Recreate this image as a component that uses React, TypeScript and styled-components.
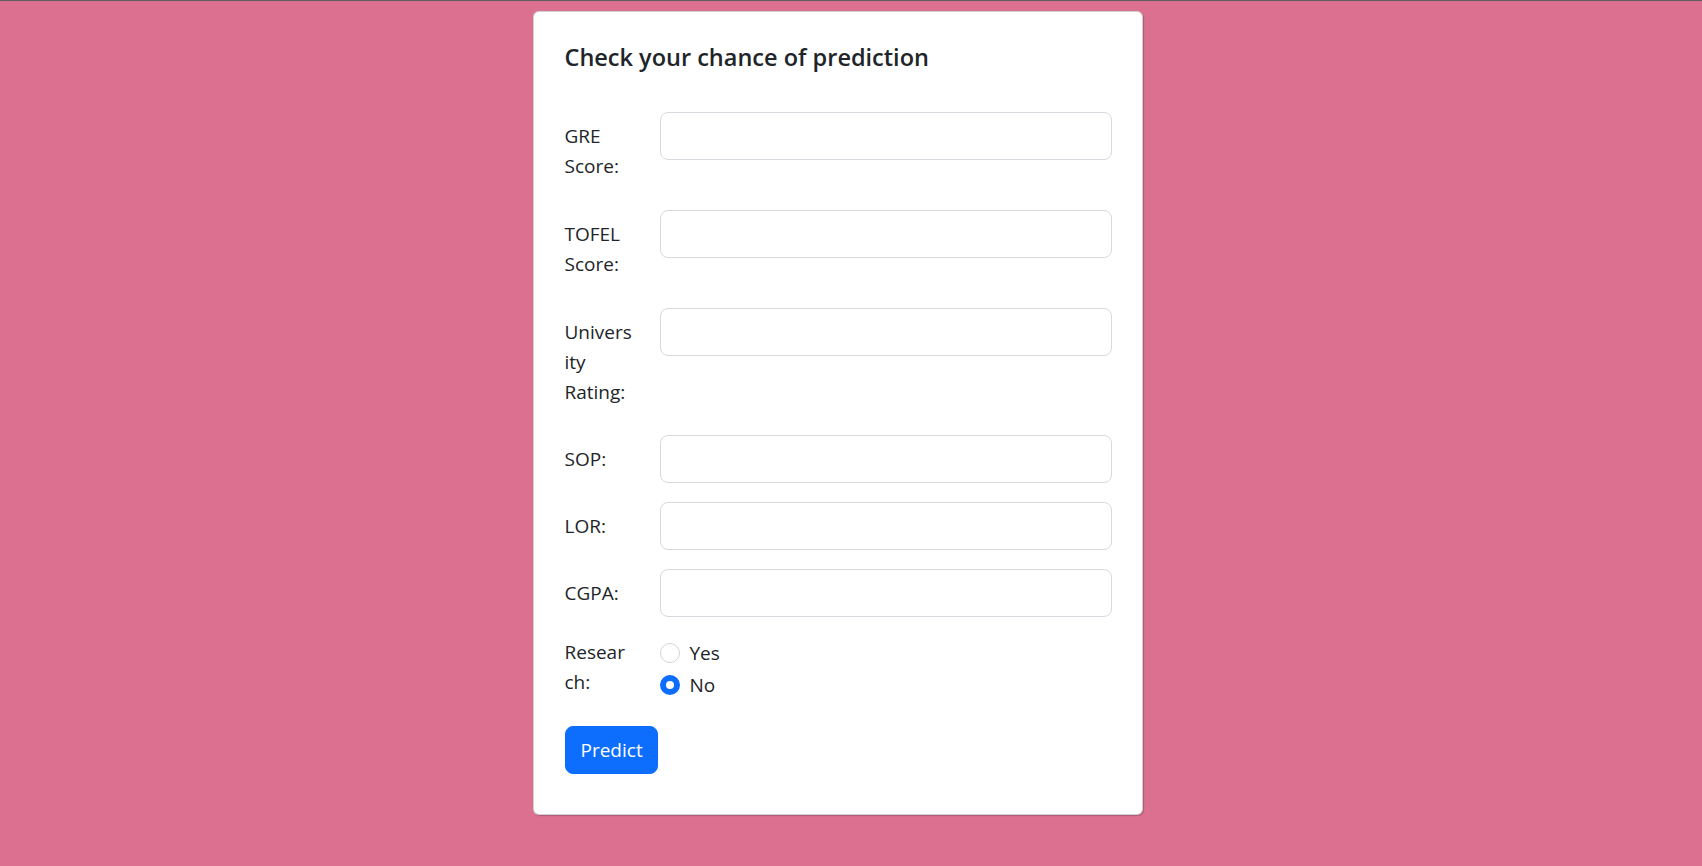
import React, { useState } from "react";
import styled, { createGlobalStyle } from "styled-components";

const GlobalStyle = createGlobalStyle`
  html, body {
    margin: 0;
    padding: 0;
  }
  body {
    background: #dc7090;
    border-top: 1px solid #5f5f62;
    font-family: "Open Sans", "Noto Sans", sans-serif;
    color: #212529;
    min-height: 865px;
  }
`;

const Page = styled.div`
  display: flex;
  justify-content: center;
  padding: 10px 27px 0 0;
`;

const Card = styled.div`
  width: 610px;
  box-sizing: border-box;
  background: #fff;
  border: 1px solid rgba(0, 0, 0, 0.18);
  border-radius: 6px;
  box-shadow: 1px 1px 1px rgba(0, 0, 0, 0.2);
  padding: 30px 30px 40px 31px;
`;

const Title = styled.h4`
  margin: 0 0 41px;
  padding-top: 1px;
  font-size: 23.5px;
  font-weight: 600;
  line-height: 28px;
  color: #212529;
`;

const Row = styled.div<{ $gap?: number }>`
  display: grid;
  grid-template-columns: 71px 1fr;
  column-gap: 24px;
  align-items: start;
  margin-bottom: ${(p) => p.$gap ?? 20}px;
`;

const Label = styled.label<{ $flush?: boolean }>`
  font-size: 19px;
  line-height: 30px;
  padding: ${(p) => (p.$flush ? "0" : "9px 0")};
  color: #212529;
  overflow-wrap: anywhere;
`;

const Input = styled.input`
  display: block;
  width: 100%;
  height: 48px;
  box-sizing: border-box;
  border: 1px solid #d6d9de;
  border-radius: 8px;
  padding: 8px 16px;
  font-size: 20px;
  font-family: inherit;
  background: #fff;
  outline: none;
`;

const RadioGroup = styled.div`
  display: flex;
  flex-direction: column;
  gap: 2px;
  padding-top: 1px;
`;

const RadioItem = styled.label`
  display: flex;
  align-items: center;
  gap: 10px;
  height: 30px;
  font-size: 19px;
  color: #212529;
`;

const Radio = styled.input`
  appearance: none;
  margin: 0;
  width: 20px;
  height: 20px;
  border-radius: 50%;
  border: 1px solid #d3d5d8;
  background: #fff;
  box-sizing: border-box;
  &:checked {
    border: 6px solid #0d6efd;
    background: #fff;
  }
`;

const Button = styled.button`
  font-family: inherit;
  font-size: 19px;
  line-height: 30px;
  color: #fff;
  background: #0d6efd;
  border: 1px solid #0d6efd;
  border-radius: 8px;
  padding: 8px 15px;
  height: 48px;
  width: 93px;
  cursor: pointer;
`;

const fields: { id: string; label: React.ReactNode; gap?: number }[] = [
  { id: "gre", label: "GRE Score:" },
  { id: "tofel", label: "TOFEL Score:" },
  {
    id: "univ",
    label: (
      <>
        Univers
        <br />
        ity Rating:
      </>
    ),
    gap: 19,
  },
  { id: "sop", label: "SOP:", gap: 19 },
  { id: "lor", label: "LOR:", gap: 19 },
  { id: "cgpa", label: "CGPA:", gap: 20 },
];

export default function App() {
  const [research, setResearch] = useState("no");
  return (
    <>
      <GlobalStyle />
      <Page>
        <Card>
          <Title>Check your chance of prediction</Title>
          <form onSubmit={(e) => e.preventDefault()}>
            {fields.map((f) => (
              <Row key={f.id} $gap={f.gap}>
                <Label htmlFor={f.id}>{f.label}</Label>
                <Input id={f.id} type="text" />
              </Row>
            ))}
            <Row $gap={26}>
              <Label $flush>
                Resear
                <br />
                ch:
              </Label>
              <RadioGroup>
                <RadioItem>
                  <Radio
                    type="radio"
                    name="research"
                    checked={research === "yes"}
                    onChange={() => setResearch("yes")}
                  />
                  Yes
                </RadioItem>
                <RadioItem>
                  <Radio
                    type="radio"
                    name="research"
                    checked={research === "no"}
                    onChange={() => setResearch("no")}
                  />
                  No
                </RadioItem>
              </RadioGroup>
            </Row>
            <Button type="submit">Predict</Button>
          </form>
        </Card>
      </Page>
    </>
  );
}
